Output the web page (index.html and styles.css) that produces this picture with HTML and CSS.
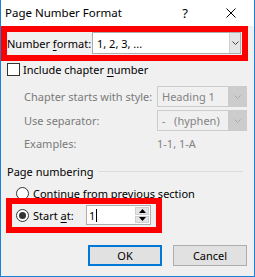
FILE: index.html
```html
<!DOCTYPE html>
<html lang="en">
<head>
    <meta charset="UTF-8">
    <title>Page Number Format</title>
    <link rel="stylesheet" href="styles.css">
</head>
<body>
    <div class="dialog">
        <div class="titlebar">
            <span class="title">Page Number Format</span>
            <span class="help">?</span>
            <svg class="close" width="10" height="10" viewBox="0 0 10 10">
                <path d="M0.5 0.5 L9.5 9.5 M9.5 0.5 L0.5 9.5" stroke="#000" stroke-width="1" fill="none"/>
            </svg>
        </div>

        <div class="body">
            <div class="format-row">
                <span class="format-label">Number <u>f</u>ormat:</span>
                <div class="combo format-combo">
                    <span class="combo-text">1, 2, 3, ...</span>
                    <span class="drop">
                        <svg width="7" height="4" viewBox="0 0 7 4"><path d="M0.5 0.5 L3.5 3.5 L6.5 0.5" stroke="#444" fill="none"/></svg>
                    </span>
                </div>
            </div>

            <div class="check-row">
                <span class="checkbox"></span>
                <span>Include chapter <u>n</u>umber</span>
            </div>

            <div class="sub">
                <div class="sub-row">
                    <span class="sub-label">Chapter starts with style:</span>
                    <div class="combo disabled">
                        <span class="combo-text">Heading 1</span>
                        <span class="drop">
                            <svg width="7" height="4" viewBox="0 0 7 4"><path d="M0.5 0.5 L3.5 3.5 L6.5 0.5" stroke="#a8a8a8" fill="none"/></svg>
                        </span>
                    </div>
                </div>
                <div class="sub-row">
                    <span class="sub-label">Use separator:</span>
                    <div class="combo disabled">
                        <span class="combo-text">-&nbsp;&nbsp;&nbsp;(hyphen)</span>
                        <span class="drop">
                            <svg width="7" height="4" viewBox="0 0 7 4"><path d="M0.5 0.5 L3.5 3.5 L6.5 0.5" stroke="#a8a8a8" fill="none"/></svg>
                        </span>
                    </div>
                </div>
                <div class="sub-row examples">
                    <span class="sub-label">Examples:</span>
                    <span class="example-text">1-1, 1-A</span>
                </div>
            </div>

            <div class="group-title">
                <span>Page numbering</span>
                <span class="rule"></span>
            </div>

            <div class="radio-row">
                <span class="radio"></span>
                <span>Continue from previous section</span>
            </div>

            <div class="radio-row start-row">
                <span class="radio checked"></span>
                <span class="start-label">Start <u>a</u>t:</span>
                <div class="spin">
                    <span class="spin-value">1<span class="caret"></span></span>
                    <span class="spin-buttons">
                        <span class="spin-btn">
                            <svg width="7" height="4" viewBox="0 0 7 4"><path d="M0 4 L3.5 0 L7 4 Z" fill="#000"/></svg>
                        </span>
                        <span class="spin-btn">
                            <svg width="7" height="4" viewBox="0 0 7 4"><path d="M0 0 L3.5 4 L7 0 Z" fill="#000"/></svg>
                        </span>
                    </span>
                </div>
            </div>

            <div class="buttons">
                <button class="btn ok">OK</button>
                <button class="btn">Cancel</button>
            </div>
        </div>

        <!-- red highlight boxes drawn over the dialog -->
        <div class="mark mark-format"></div>
        <div class="mark mark-start"></div>
    </div>
</body>
</html>
```

FILE: styles.css
```css
* {
    margin: 0;
    padding: 0;
    box-sizing: border-box;
}

body {
    width: 255px;
    height: 277px;
    overflow: hidden;
    font-family: 'Noto Sans', 'Open Sans', sans-serif;
    font-size: 11px;
    line-height: 15px;
    color: #000;
    background: #fff;
    white-space: nowrap;
}

.dialog {
    position: relative;
    width: 255px;
    height: 277px;
    background: #f0f0f0;
    border: 1px solid #1c7fd6;
    border-top: none;
}

.titlebar {
    display: flex;
    align-items: center;
    height: 26px;
    background: #fff;
    padding-left: 4px;
}

.title {
    font-size: 11.5px;
    line-height: 16px;
}

.help {
    margin-left: auto;
    font-size: 13px;
    line-height: 16px;
    margin-right: 38px;
}

.close {
    margin-right: 18px;
    display: block;
}

.body {
    padding: 6px 6px 0 6px;
}

u {
    text-decoration: underline;
    text-underline-offset: 2px;
}

/* number format row */
.format-row {
    display: flex;
    align-items: center;
    height: 22px;
}

.format-label {
    width: 85px;
}

.combo {
    display: flex;
    align-items: center;
    height: 22px;
    background: #fff;
    border: 1px solid #adadad;
}

.format-combo {
    width: 149px;
}

.combo-text {
    flex: 1;
    padding-left: 4px;
    overflow: hidden;
}

.drop {
    display: flex;
    align-items: center;
    justify-content: center;
    width: 11px;
    height: 100%;
    background: #e5e5e5;
    border-left: 1px solid #d0d0d0;
}

/* checkbox */
.check-row {
    display: flex;
    align-items: center;
    height: 13px;
    margin-top: 9px;
}

.checkbox {
    width: 13px;
    height: 13px;
    border: 1px solid #333;
    background: #fff;
    margin-right: 3px;
}

/* disabled sub options */
.sub {
    padding-left: 17px;
    color: #7a7a7a;
}

.sub-row {
    display: flex;
    align-items: center;
    margin-top: 3px;
}

.sub-row:first-child {
    margin-top: 10px;
}

.sub-label {
    width: 133px;
}

.combo.disabled {
    width: 90px;
    height: 21px;
    background: #f0f0f0;
    border-color: #cccccc;
    color: #838383;
}

.combo.disabled .drop {
    width: 18px;
    background: #cccccc;
    border-left: none;
}

.examples {
    height: 15px;
    margin-top: 5px;
}

.example-text {
    color: #838383;
}

/* page numbering group */
.group-title {
    display: flex;
    align-items: center;
    height: 16px;
    margin-top: 12px;
}

.rule {
    flex: 1;
    height: 1px;
    background: #dcdcdc;
    margin-left: 5px;
    margin-right: 5px;
}

.radio-row {
    display: flex;
    align-items: center;
    height: 14px;
    margin-top: 7px;
    padding-left: 9px;
}

.radio {
    width: 13px;
    height: 13px;
    border: 1px solid #333;
    border-radius: 50%;
    background: #fff;
    margin-right: 4px;
    display: flex;
    align-items: center;
    justify-content: center;
}

.radio.checked::after {
    content: "";
    width: 7px;
    height: 7px;
    border-radius: 50%;
    background: #333;
}

.start-row {
    height: 20px;
    margin-top: 5px;
}

.start-label {
    width: 53px;
}

.spin {
    display: flex;
    width: 65px;
    height: 20px;
    background: #fff;
    border: 1px solid #adadad;
}

.spin-value {
    flex: 1;
    display: flex;
    align-items: center;
    padding-left: 2px;
}

.caret {
    width: 1px;
    height: 13px;
    background: #000;
    margin-left: 1px;
}

.spin-buttons {
    display: flex;
    flex-direction: column;
    width: 16px;
    padding: 1px;
}

.spin-btn {
    flex: 1;
    display: flex;
    align-items: center;
    justify-content: center;
    background: #e5e5e5;
    border: 1px solid #cfcfcf;
}

.spin-btn + .spin-btn {
    margin-top: 1px;
}

/* buttons */
.buttons {
    display: flex;
    justify-content: flex-end;
    gap: 11px;
    margin-top: 20px;
    padding-right: 1px;
}

.btn {
    width: 74px;
    height: 21px;
    font-family: inherit;
    font-size: 11px;
    color: #000;
    background: #e1e1e1;
    border: 1px solid #adadad;
}

.btn.ok {
    border: 2px solid #0078d7;
}

/* red annotation boxes */
.mark {
    position: absolute;
    border: 6px solid #ff0000;
}

.mark-format {
    left: 0;
    top: 26px;
    width: 247px;
    height: 35px;
}

.mark-start {
    left: 5px;
    top: 198px;
    width: 156px;
    height: 35px;
}
```
